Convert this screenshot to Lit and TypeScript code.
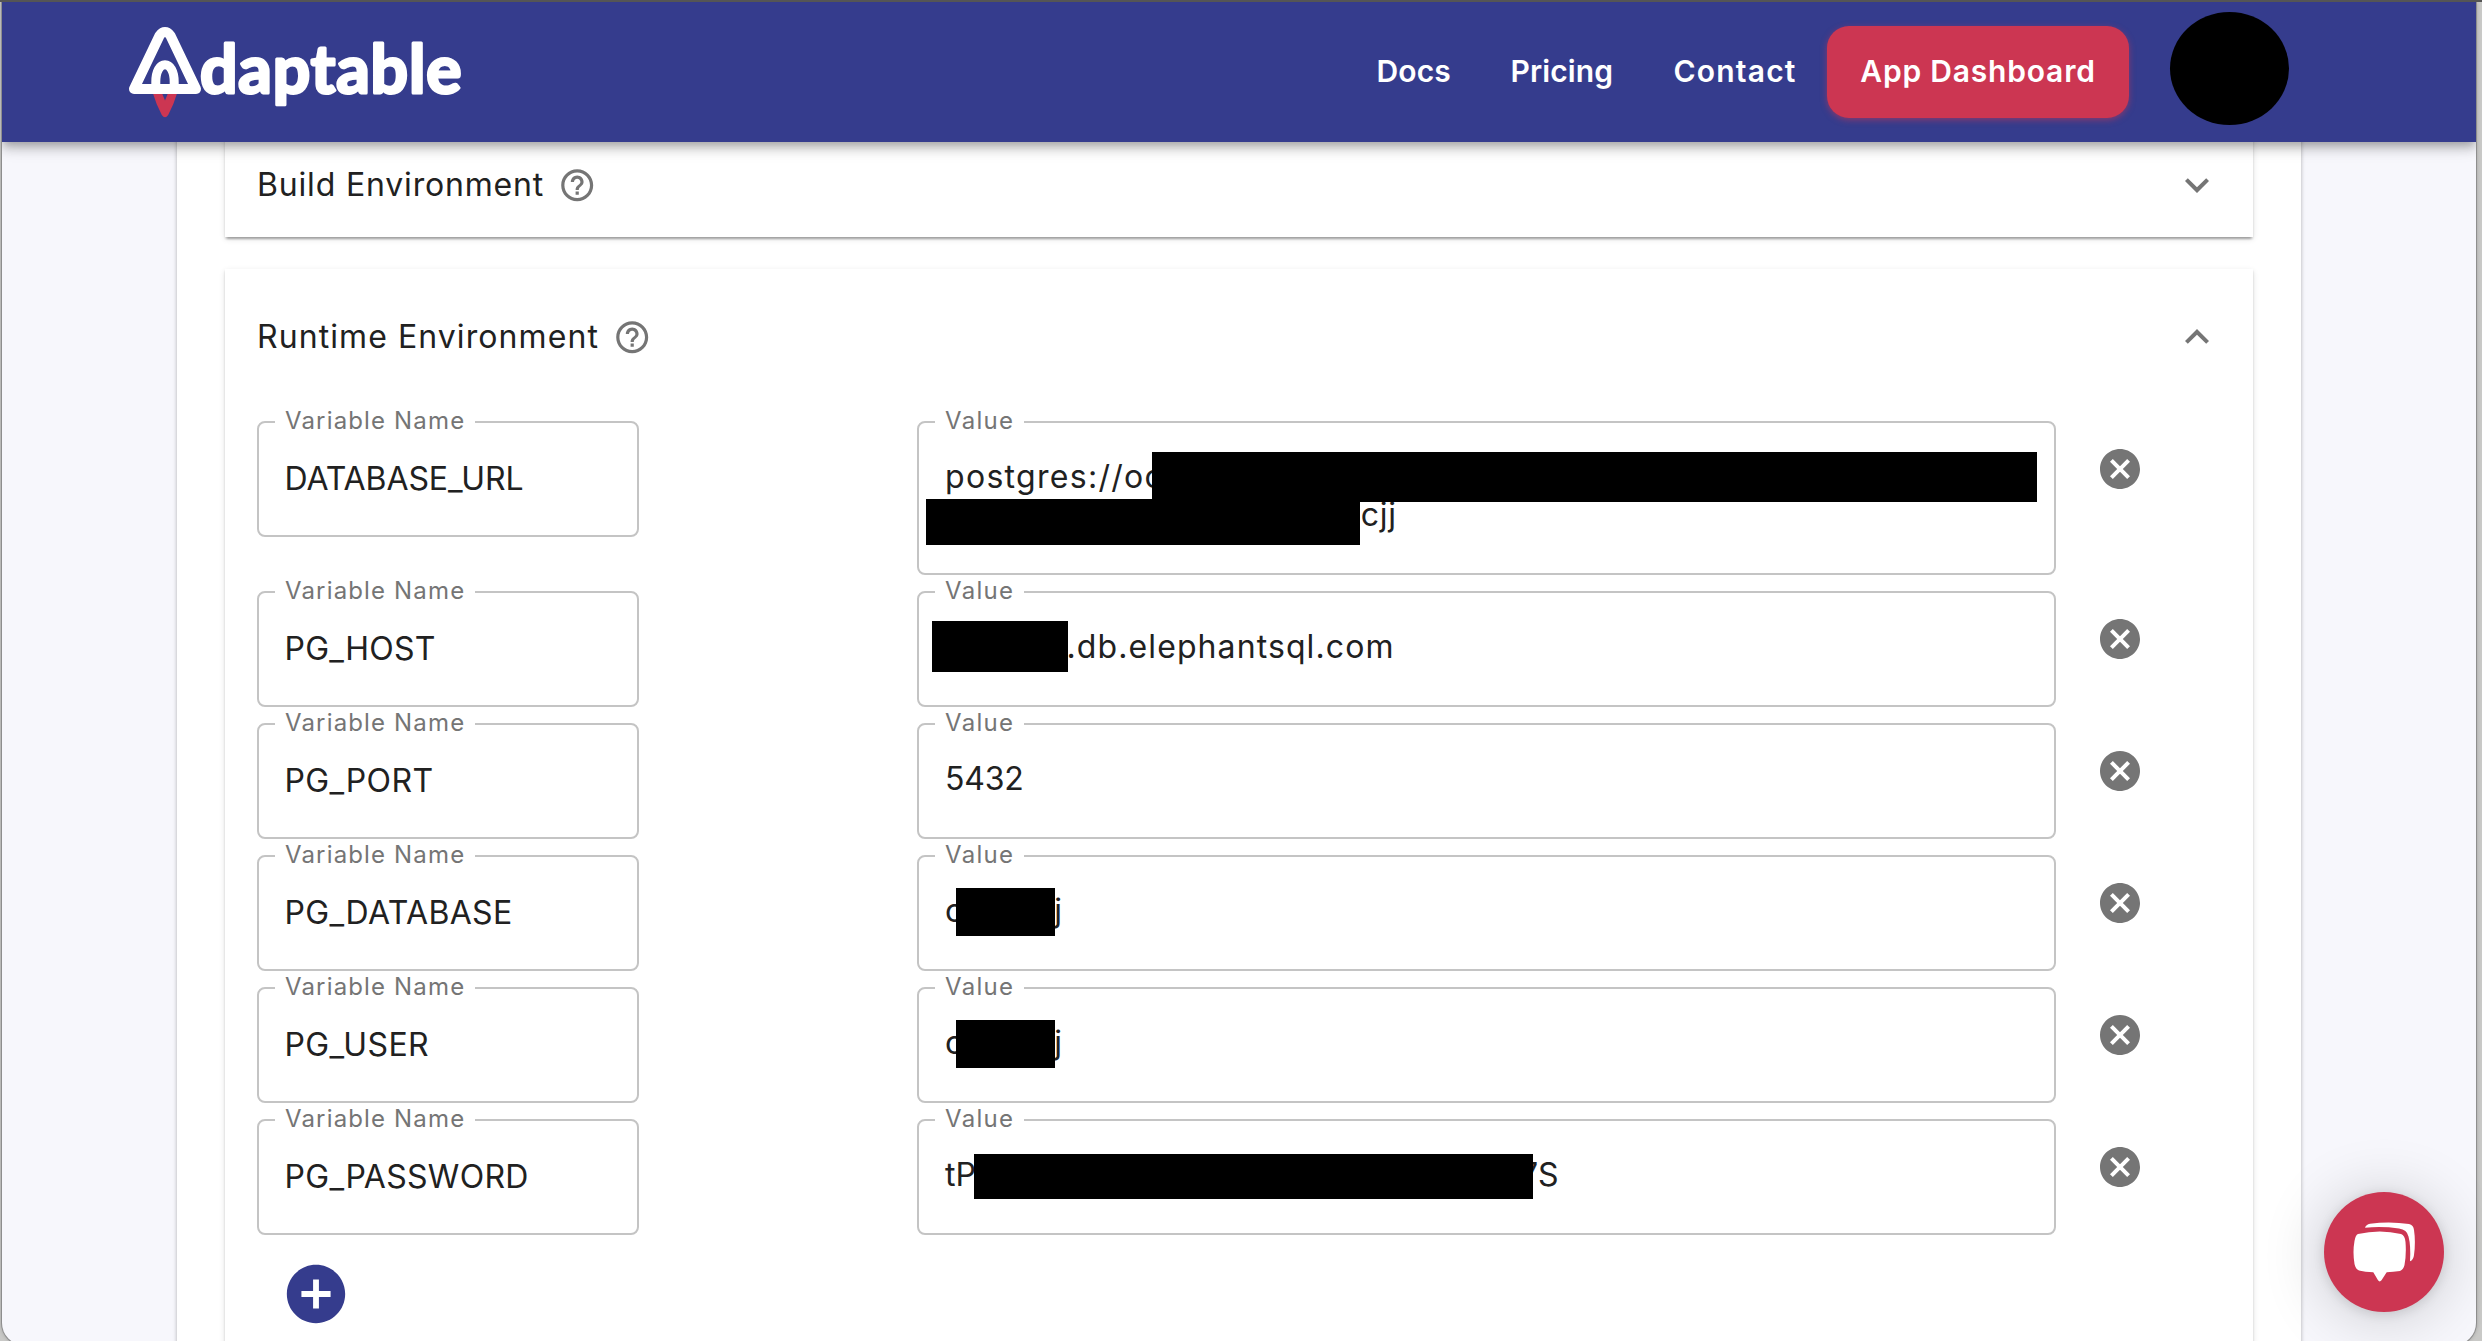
import { LitElement, html, css, svg } from "lit";
import { customElement, property } from "lit/decorators.js";
import { styleMap } from "lit/directives/style-map.js";

type Piece = { text: string; track?: number } | { gap: number };
type Mask = { x: number; y: number; w: number; h: number };
interface EnvVar {
  name: string;
  track: number;
  lines: Piece[][];
  masks: Mask[];
}

const VARS: EnvVar[] = [
  {
    name: "DATABASE_URL",
    track: -0.08,
    lines: [
      [{ text: "postgres://oc", track: 1.3 }],
      [{ gap: 415.7 }, { text: "cjj", track: 0.8 }],
    ],
    masks: [
      { x: 235, y: 31, w: 884.5, h: 50 },
      { x: 9, y: 78, w: 433.5, h: 46 },
    ],
  },
  {
    name: "PG_HOST",
    track: 0.25,
    lines: [[{ gap: 121.5 }, { text: ".db.elephantsql.com", track: 1.1 }]],
    masks: [{ x: 15, y: 30, w: 135.5, h: 50.5 }],
  },
  { name: "PG_PORT", track: 0.4, lines: [[{ text: "5432", track: -0.2 }]], masks: [] },
  {
    name: "PG_DATABASE",
    track: 0.36,
    lines: [[{ text: "o" }, { gap: 90 }, { text: "j" }]],
    masks: [{ x: 38.5, y: 32.5, w: 99.5, h: 48 }],
  },
  {
    name: "PG_USER",
    track: 0.4,
    lines: [[{ text: "o" }, { gap: 90 }, { text: "j" }]],
    masks: [{ x: 38.5, y: 33, w: 99.5, h: 48 }],
  },
  {
    name: "PG_PASSWORD",
    track: 0.3,
    lines: [[{ text: "tP" }, { gap: 544 }, { text: "7S" }]],
    masks: [{ x: 57, y: 34.5, w: 559, h: 45.5 }],
  },
];

const tracked = (n = 0) => styleMap({ letterSpacing: `${n}px` });

const ICONS = {
  help: svg`<path d="M11 18h2v-2h-2v2zm1-16C6.48 2 2 6.48 2 12s4.48 10 10 10 10-4.48 10-10S17.52 2 12 2zm0 18c-4.41 0-8-3.59-8-8s3.59-8 8-8 8 3.59 8 8-3.59 8-8 8zm0-14c-2.21 0-4 1.79-4 4h2c0-1.1.9-2 2-2s2 .9 2 2c0 2-3 1.75-3 5h2c0-2.25 3-2.5 3-5 0-2.21-1.79-4-4-4z"/>`,
  down: svg`<path d="M16.59 8.59 12 13.17 7.41 8.59 6 10l6 6 6-6z"/>`,
  up: svg`<path d="m12 8-6 6 1.41 1.41L12 10.83l4.59 4.58L18 14z"/>`,
  cancel: svg`<path d="M12 2C6.47 2 2 6.47 2 12s4.47 10 10 10 10-4.47 10-10S17.53 2 12 2zm5 13.59L15.59 17 12 13.41 8.41 17 7 15.59 10.59 12 7 8.41 8.41 7 12 10.59 15.59 7 17 8.41 13.41 12 17 15.59z"/>`,
  add: svg`<path d="M12 2C6.48 2 2 6.48 2 12s4.48 10 10 10 10-4.48 10-10S17.52 2 12 2zm5 11h-4v4h-2v-4H7v-2h4V7h2v4h4v2z"/>`,
};

@customElement("md-icon")
class MdIcon extends LitElement {
  @property() name: keyof typeof ICONS = "help";
  static styles = css`
    :host { display: flex; flex: none; width: 48px; height: 48px; color: #757575; }
    svg { width: 100%; height: 100%; fill: currentColor; }
  `;
  render() {
    return html`<svg viewBox="0 0 24 24">${ICONS[this.name]}</svg>`;
  }
}

@customElement("outlined-field")
class OutlinedField extends LitElement {
  @property() label = "";
  @property({ type: Number }) track = 0;
  static styles = css`
    :host {
      display: block; position: relative; box-sizing: border-box;
      border: 2px solid #c4c4c4; border-radius: 8px; min-height: 116px;
    }
    .label {
      position: absolute; top: -14px; left: 16px; padding: 0 10px; height: 24px;
      background: #fff; color: #757575; font-size: 24px; line-height: 24px; white-space: nowrap;
    }
  `;
  render() {
    return html`<span class="label" style=${tracked(this.track)}>${this.label}</span><slot></slot>`;
  }
}

@customElement("site-header")
class SiteHeader extends LitElement {
  static styles = css`
    :host {
      display: flex; align-items: center; box-sizing: border-box; height: 140px;
      padding: 0 187px 0 119px; background: #353c8d; color: #fff; position: relative; z-index: 2;
      box-shadow: 0 4px 8px -2px rgba(0,0,0,.2), 0 8px 10px rgba(0,0,0,.14), 0 2px 20px rgba(0,0,0,.12);
    }
    .logo { width: 350px; height: 110px; flex: none; }
    .word { font: 700 66px Lato, sans-serif; letter-spacing: .9px; fill: #fff; stroke: #fff; stroke-width: 3px; stroke-linejoin: round; }
    nav { display: flex; align-items: center; margin-left: auto; font-weight: 600; font-size: 30px; line-height: 90px; }
    a { white-space: nowrap; padding-bottom: 2px; }
    .docs { width: 134px; }
    .pricing { width: 163px; }
    .contact { width: 153.5px; }
    .cta {
      display: flex; justify-content: center; box-sizing: border-box; width: 302px; height: 92px;
      border-radius: 22px; background: #cc3652; box-shadow: 0 2px 6px rgba(204,54,82,.55);
    }
    .avatar { width: 119px; height: 113px; border-radius: 50%; background: #000; margin: -7px 0 0 41px; }
  `;
  render() {
    return html`
      <svg class="logo" viewBox="121 17 350 110">
        <path fill="#cc3652" d="M152.5 92Q156 104 161.8 115Q165 119.5 168.2 115Q174 104 177.5 92H168.5L165 100.5L161.5 92Z"/>
        <g fill="none" stroke="#fff" stroke-linejoin="round">
          <path stroke-width="10" d="M134 89L159.6 35.5Q165 28.5 170.4 35.5L196 89Z"/>
          <path stroke-width="9" d="M155.8 89V82C155.8 71 160 64.7 165 64.7C170 64.7 174.2 71 174.2 82V89"/>
        </g>
        <text class="word" x="200" y="92.5">daptable</text>
      </svg>
      <nav>
        <a class="docs" style=${tracked(0.1)}>Docs</a>
        <a class="pricing" style=${tracked(0.1)}>Pricing</a>
        <a class="contact" style=${tracked(1.2)}>Contact</a>
        <div class="cta"><a style=${tracked(0.8)}>App Dashboard</a></div>
      </nav>
      <div class="avatar"></div>
    `;
  }
}

@customElement("env-row")
class EnvRow extends LitElement {
  @property({ attribute: false }) item!: EnvVar;
  static styles = css`
    :host { display: grid; grid-template-columns: 660px 1179px 48px; align-items: start; }
    .name, .value { color: #212121; font-size: 32px; line-height: 38px; }
    .name { width: 382px; padding: 37px 0 0 25.5px; white-space: nowrap; }
    .value { width: 1139px; padding: 35px 0 0 26px; }
    .tall { height: 154px; }
    .line { display: flex; height: 38px; }
    .mask { position: absolute; background: #000; }
    md-icon { margin-top: 24px; }
  `;
  render() {
    const v = this.item;
    return html`
      <outlined-field class="name" label="Variable Name" .track=${1.15} style=${tracked(v.track)}>${v.name}</outlined-field>
      <outlined-field class="value ${v.lines.length > 1 ? "tall" : ""}" label="Value" .track=${1.3}>
        ${v.lines.map(
          (line) => html`<div class="line">${line.map((p) =>
            "gap" in p
              ? html`<span style=${styleMap({ width: `${p.gap}px` })}></span>`
              : html`<span style=${tracked(p.track)}>${p.text}</span>`
          )}</div>`
        )}
        ${v.masks.map(
          (m) => html`<div class="mask" style=${styleMap({
            left: `${m.x - 2}px`, top: `${m.y - 2}px`, width: `${m.w}px`, height: `${m.h}px`,
          })}></div>`
        )}
      </outlined-field>
      <md-icon name="cancel"></md-icon>
    `;
  }
}

@customElement("app-root")
class AppRoot extends LitElement {
  static styles = css`
    :host {
      display: block; box-sizing: border-box; width: 2482px; height: 1341px; overflow: hidden;
      position: relative; background: #c9c9c7; border-top: 2px solid #555; padding: 0 6px 0 2px;
      font-family: Inter, sans-serif; color: #212121;
    }
    .window {
      height: 1343px; overflow: hidden; background: #f7f7fc; border-radius: 0 0 22px 22px;
      box-shadow: 0 0 0 1px #8e8e8e, 0 0 4px rgba(0,0,0,.3);
    }
    .page {
      box-sizing: border-box; width: 2124px; height: 1300px; margin: -9px 0 0 175px; padding: 0 48px;
      background: #fff; box-shadow: 0 0 4px rgba(0,0,0,.3);
      display: flex; flex-direction: column; gap: 32px;
    }
    .card {
      background: #fff; padding: 0 32px;
      box-shadow: 0 4px 2px -2px rgba(0,0,0,.2), 0 2px 2px rgba(0,0,0,.14), 0 2px 6px rgba(0,0,0,.12);
    }
    .open { flex: none; height: 1200px; }
    .head { display: flex; align-items: center; height: 104px; font-size: 32px; line-height: 38px; }
    .open .head { height: 136px; }
    .title { white-space: nowrap; margin-top: -1px; }
    .help { width: 38.4px; height: 38.4px; margin: 0 0 0 14px; }
    .toggle { margin-left: auto; }
    .rows { display: flex; flex-direction: column; gap: 16px; padding-top: 16px; }
    .add { width: 70px; height: 70px; color: #353c8d; margin: 24px 0 0 24px; }
    .chat {
      position: absolute; left: 2324px; top: 1190px; width: 120px; height: 120px; z-index: 3;
      border-radius: 50%; background: #cc3652;
      box-shadow: 0 2px 12px rgba(0,0,0,.12), 0 4px 64px rgba(0,0,0,.2);
    }
    .chat svg { display: block; width: 120px; height: 120px; fill: #fff; }
  `;
  render() {
    return html`
      <div class="window">
        <site-header></site-header>
        <main class="page">
          <section class="card">
            <div class="head">
              <span class="title" style=${tracked(0.83)}>Build Environment</span>
              <md-icon class="help" name="help"></md-icon>
              <md-icon class="toggle" name="down"></md-icon>
            </div>
          </section>
          <section class="card open">
            <div class="head">
              <span class="title" style=${tracked(1.08)}>Runtime Environment</span>
              <md-icon class="help" name="help"></md-icon>
              <md-icon class="toggle" name="up"></md-icon>
            </div>
            <div class="rows">${VARS.map((v) => html`<env-row .item=${v}></env-row>`)}</div>
            <md-icon class="add" name="add"></md-icon>
          </section>
        </main>
      </div>
      <div class="chat">
        <svg viewBox="0 0 120 120">
          <path d="M34 42Q56 37 77 42Q81 43.5 81.5 50Q82.5 62 80.5 73Q79.5 77.5 76 79Q69 80 62.7 80.2L57.5 88.3Q55.7 90.5 54 88.3L49.3 80.2Q41 80 35 78.5Q31.5 77 30.5 72Q28.5 60 30.5 49Q31.5 43 34 42Z"/>
          <path d="M41 35.7Q42 32.5 46 31.7Q66 29 85 32Q89.5 33 90 38Q91.8 50 90 63Q89.5 68 86 69.3Q87 54 84.5 44.5Q83 37.5 75 36.5Q58 34 41 35.7Z"/>
        </svg>
      </div>
    `;
  }
}
